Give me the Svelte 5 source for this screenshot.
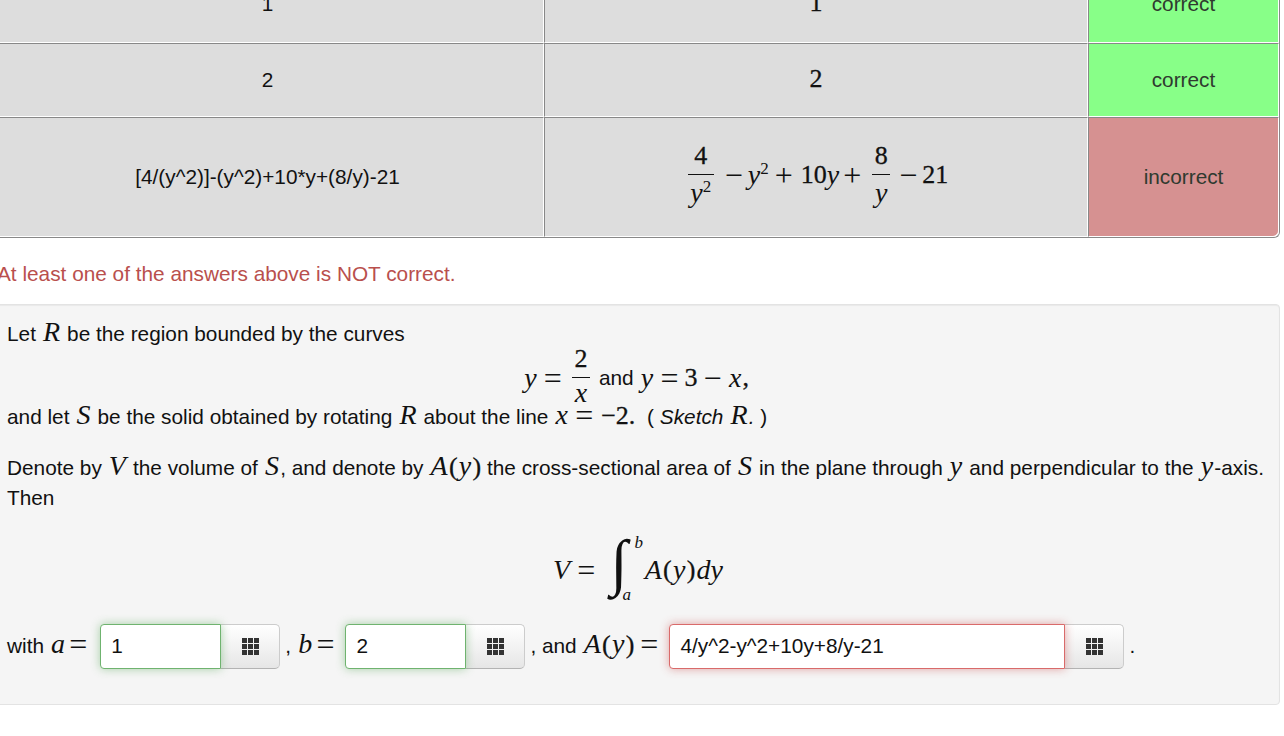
<script>
  const rows = [
    { entered: '1', preview: '1', ok: true },
    { entered: '2', preview: '2', ok: true }
  ];
</script>

{#snippet grid()}
  <svg class="grid" width="17" height="17" viewBox="0 0 17 17" aria-hidden="true">
    {#each [0, 6, 12] as y}
      {#each [0, 6, 12] as x}
        <rect {x} {y} width="5" height="5" />
      {/each}
    {/each}
  </svg>
{/snippet}

<div class="page">
  <table class="results">
    <tbody>
      {#each rows as row}
        <tr>
          <td class="entered">{row.entered}</td>
          <td class="preview"><span class="num">{row.preview}</span></td>
          <td class="status ok">correct</td>
        </tr>
      {/each}
      <tr class="tall">
        <td class="entered">[4/(y^2)]-(y^2)+10*y+(8/y)-21</td>
        <td class="preview">
          <span class="expr">
            <span class="frac wide"><span class="top num">4</span><span class="bot"><i>y</i><sup>2</sup></span></span>
            <span class="op minus">−</span><span class="term"><i>y</i><sup>2</sup></span><span class="op plus">+</span><span class="num">10</span><i>y</i><span class="op tight">+</span>
            <span class="frac second"><span class="top num">8</span><span class="bot"><i>y</i></span></span>
            <span class="op minus">−</span><span class="num">21</span>
          </span>
        </td>
        <td class="status bad">incorrect</td>
      </tr>
    </tbody>
  </table>

  <p class="alert">At least one of the answers above is NOT correct.</p>

  <div class="well">
    <p>Let <i class="m">R</i> be the region bounded by the curves</p>
    <div class="display curves">
      <i class="m">y</i><span class="eq">=</span>
      <span class="frac"><span class="top num">2</span><span class="bot"><i>x</i></span></span>
      <span class="and">and</span><i class="m">y</i><span class="eq">=</span><span class="num">3</span><span class="eq">−</span><i class="m">x</i><span class="num">,</span>
    </div>
    <p class="after">and let <i class="m">S</i> be the solid obtained by rotating <i class="m">R</i> about the line <i class="m">x</i><span class="eq">=</span><span class="num two">−2.</span> ( <em>Sketch <i class="m">R</i>.</em> )</p>
    <p class="para">Denote by <i class="m">V</i> the volume of <i class="m">S</i>, and denote by <i class="m">A</i><span class="num">(</span><i class="m">y</i><span class="num">)</span> the cross-sectional area of <i class="m">S</i> in the plane through <i class="m">y</i> and perpendicular to the <i class="m">y</i>-axis. Then</p>
    <div class="display integral">
      <i class="m">V</i><span class="eq">=</span>
      <span class="int"><span class="sign">∫</span><i class="upper">b</i><i class="lower">a</i></span>
      <i class="m">A</i><span class="num">(</span><i class="m">y</i><span class="num">)</span><i class="m">dy</i>
    </div>
    <div class="answers">
      <span class="label">with <i class="m">a</i><span class="eq">=</span></span>
      <span class="group short">
        <input class="good" value="1" readonly />
        <button type="button">{@render grid()}</button>
      </span>
      <span class="label sep">, <i class="m">b</i><span class="eq">=</span></span>
      <span class="group short mid">
        <input class="good" value="2" readonly />
        <button type="button">{@render grid()}</button>
      </span>
      <span class="label sep area">, and <i class="m">A</i><span class="num">(</span><i class="m">y</i><span class="num">)</span><span class="eq">=</span></span>
      <span class="group long">
        <input class="wrong" value="4/y^2-y^2+10y+8/y-21" readonly />
        <button type="button">{@render grid()}</button>
      </span>
      <span class="label sep">.</span>
    </div>
  </div>
</div>

<style>
  :global(body) {
    margin: 0;
    background: #fff;
    overflow: hidden;
  }

  .page {
    width: 1288px;
    margin: -35px 0 0 -8px;
    font-family: "Liberation Sans", Arial, sans-serif;
    font-size: 20.8px;
    line-height: 30px;
    color: #111;
  }

  i {
    font-family: "Liberation Serif", serif;
    font-style: italic;
  }

  .m {
    font-size: 28px;
    line-height: 20px;
    margin: 0 1.25px;
  }

  .num {
    font-family: "Liberation Serif", serif;
    font-size: 26px;
    line-height: 20px;
    -webkit-text-stroke: 0.3px;
  }

  .two {
    margin: 0 6px 0 2px;
  }

  .eq {
    font-family: "Liberation Serif", serif;
    font-size: 32px;
    line-height: 20px;
    margin: 0 6px;
    vertical-align: -2px;
  }

  .results {
    width: 1288px;
    border-collapse: separate;
    border-spacing: 0;
    border-right: 1px solid #888;
    border-bottom: 1px solid #888;
    border-radius: 0 0 6px 0;
    table-layout: fixed;
  }

  td {
    height: 72px;
    padding: 0;
    text-align: center;
    vertical-align: middle;
    background: #ddd;
    border-top: 1px solid #888;
    border-left: 1px solid #888;
    border-right: 1px solid #fff;
    border-bottom: 1px solid #fff;
  }

  tr:first-child td {
    height: 76px;
  }

  .entered {
    width: 551px;
    border-left: 0;
  }

  .status {
    width: 189px;
    color: #2f3a2f;
  }

  .ok {
    background-color: #8f8;
  }

  .bad {
    background-color: #d69191;
    border-radius: 0 0 6px 0;
  }

  .tall td {
    height: 118px;
  }

  .expr {
    display: inline-flex;
    align-items: center;
    margin: 0 0 4px 4px;
    font-family: "Liberation Serif", serif;
    font-size: 26px;
    line-height: 30px;
  }

  .expr i {
    font-size: 28px;
  }

  sup {
    font-size: 17px;
    line-height: 0;
    vertical-align: 10px;
  }

  .frac {
    display: inline-flex;
    flex-direction: column;
    align-items: center;
    width: 18px;
    margin: 0 9px;
    font-family: "Liberation Serif", serif;
    font-size: 26px;
  }

  .frac.wide {
    width: 26px;
    margin: 0 11px 0 0;
  }

  .frac.second {
    margin-left: 5px;
  }

  .frac .top {
    width: 100%;
    text-align: center;
    line-height: 36px;
    border-bottom: 1px solid #111;
  }

  .frac .bot {
    line-height: 36px;
    white-space: nowrap;
  }

  .frac i {
    font-size: 28px;
  }

  .op {
    font-size: 32px;
    margin: 0 6px;
  }

  .minus {
    margin: 0 5px 0 0;
  }

  .plus {
    margin: 0 8px 0 6px;
  }

  .tight {
    margin: 0 6px 0 4px;
  }

  .alert {
    margin: 21px 0 0 5px;
    color: #b94f4d;
  }

  .well {
    box-sizing: border-box;
    width: 1288px;
    height: 401px;
    margin-top: 15px;
    padding: 14px 0 0 14px;
    background: #f5f5f5;
    border: 1px solid #e3e3e3;
    border-radius: 4px;
    box-shadow: inset 0 1px 1px rgba(0, 0, 0, 0.05);
  }

  p {
    margin: 0;
  }

  .display {
    display: flex;
    align-items: center;
    justify-content: center;
  }

  .curves {
    height: 50px;
    margin-top: 4px;
    padding-right: 14px;
  }

  .curves .eq {
    vertical-align: 0;
  }

  .curves .frac {
    margin: 0 9px 0 4px;
  }

  .curves .bot {
    line-height: 30px;
    padding-bottom: 6px;
  }

  .and {
    margin-right: 6px;
  }

  .after {
    margin-top: -1px;
  }

  .para {
    margin-top: 21px;
    width: 1262px;
  }

  .integral {
    height: 80px;
    margin-top: 17px;
    padding-right: 10px;
  }

  .int {
    position: relative;
    width: 29px;
    height: 70px;
    margin: 0 4px 0 9px;
  }

  .sign {
    position: absolute;
    left: 0;
    top: -4px;
    font-family: "Liberation Serif", serif;
    font-size: 62px;
    line-height: 62px;
  }

  .upper,
  .lower {
    position: absolute;
    font-size: 17px;
    line-height: 18px;
  }

  .upper {
    left: 24px;
    top: -1px;
  }

  .lower {
    left: 12px;
    top: 51px;
  }

  .answers {
    display: flex;
    align-items: center;
    height: 45px;
    margin-top: 14px;
  }

  .answers .eq {
    margin: 0 9px 0 3px;
  }

  .answers .area .eq {
    margin: 0 6px;
  }

  .label {
    padding-bottom: 2px;
  }

  .sep {
    margin-left: 5px;
  }

  .group {
    display: inline-flex;
    height: 45px;
    margin-left: 4px;
  }

  .group.mid {
    margin-left: 2px;
  }

  .group.long {
    margin-left: 5px;
  }

  .short input {
    width: 121px;
  }

  .long input {
    width: 396px;
  }

  input {
    box-sizing: border-box;
    height: 45px;
    padding: 0 10px 2px;
    font: inherit;
    color: #111;
    background: #fff;
    border: 1px solid #ccc;
    border-radius: 4px 0 0 4px;
    outline: none;
    position: relative;
  }

  .good {
    border-color: #6fb36f;
    box-shadow: 0 0 10px rgba(70, 160, 70, 0.45);
  }

  .wrong {
    border-color: #d96a6a;
    box-shadow: 0 0 10px rgba(200, 60, 60, 0.45);
  }

  button {
    box-sizing: border-box;
    width: 59px;
    height: 45px;
    padding: 0;
    display: flex;
    align-items: center;
    justify-content: center;
    background: linear-gradient(#fff, #e6e6e6);
    border: 1px solid #ccc;
    border-left: 0;
    border-bottom-color: #b3b3b3;
    border-radius: 0 5px 5px 0;
  }

  .grid rect {
    fill: #333;
  }
</style>
